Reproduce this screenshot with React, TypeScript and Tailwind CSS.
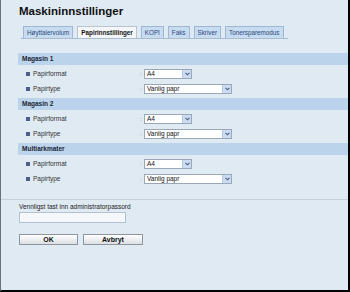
import React from 'react';

const tabs = ['Høyttalervolum', 'Papirinnstillinger', 'KOPI', 'Faks', 'Skriver', 'Tonersparemodus'];

const sections = ['Magasin 1', 'Magasin 2', 'Multiarkmater'];

const Select = ({ value, width }: { value: string; width: string }) => (
  <div className={`flex h-[10px] items-stretch border border-[#9aa7b8] bg-white ${width}`}>
    <span className="flex-1 pl-[2px] text-[6.5px] leading-[8px] text-[#111]">{value}</span>
    <span className="flex w-[9px] items-center justify-center border-l border-[#b7c7dc] bg-[#cbdcf2]">
      <svg width="5" height="4" viewBox="0 0 5 4">
        <path d="M0.5 0.8 L2.5 2.8 L4.5 0.8" stroke="#4a5a78" strokeWidth="1.1" fill="none" />
      </svg>
    </span>
  </div>
);

const Row = ({ label, children }: { label: string; children: React.ReactNode }) => (
  <div className="flex h-[15px] items-center">
    <span className="ml-[8px] h-[4px] w-[4px] bg-[#4b5f8c]" />
    <span className="ml-[3px] w-[107px] text-[6.5px] text-[#333]">{label}</span>
    <span className="w-[4px] text-[6px] leading-none text-[#666]">:</span>
    {children}
  </div>
);

export default function App() {
  return (
    <div className="box-border flex h-[292px] w-[350px] flex-col border-b-2 border-l border-r-2 border-b-black border-l-[#6b7178] border-r-black bg-[#e0eaf3] font-['Liberation_Sans',Arial,sans-serif]">
      <h1 className="ml-[18px] mt-[4px] text-[11.5px] font-bold leading-[14px] text-[#111]">Maskininnstillinger</h1>

      {/* tab strip */}
      <div className="ml-[20px] mt-[8px] flex w-[267px] gap-[4px] border-b border-[#a9bcd2] pl-[2px]">
        {tabs.map((t) => {
          const active = t === 'Papirinnstillinger';
          return (
            <div
              key={t}
              className={`flex h-[12px] items-center border border-b-0 px-[3px] text-[6.3px] ${
                active
                  ? 'border-[#b7c4d2] bg-[#f4f6f9] font-bold text-[#111]'
                  : 'border-[#9fb7d2] bg-[#c7dbf1] text-[#2a4a7c]'
              }`}
            >
              {t}
            </div>
          );
        })}
      </div>

      <div className="ml-[17px] mt-[14px] flex flex-col">
        {sections.map((s) => (
          <div key={s} className="flex h-[45px] flex-col">
            <div className="flex h-[12px] items-center bg-[#bcd4eb] pl-[4px] text-[6.5px] font-bold text-[#1b2535]">
              {s}
            </div>
            <div className="pt-[1px]">
              <Row label="Papirformat">
                <Select value="A4" width="w-[48px]" />
              </Row>
              <Row label="Papirtype">
                <Select value="Vanlig papr" width="w-[88px]" />
              </Row>
            </div>
          </div>
        ))}
      </div>

      <div className="mt-[11px] h-px w-full bg-[#c4d1de]" />

      <div className="ml-[18px] mt-[3px] flex flex-col">
        <span className="text-[6.5px] leading-[8px] text-[#222]">Vennligst tast inn administratorpassord</span>
        <div className="mt-[1px] h-[11px] w-[107px] border border-[#b3c1d1] bg-[#f5f8fb]" />
        <div className="mt-[11px] flex gap-[5px]">
          <button className="h-[11px] w-[59px] border border-[#8f959c] bg-gradient-to-b from-white to-[#dcdfe3] text-[7px] font-bold leading-none text-[#111]">
            OK
          </button>
          <button className="h-[11px] w-[60px] border border-[#8f959c] bg-gradient-to-b from-white to-[#dcdfe3] text-[7px] font-bold leading-none text-[#111]">
            Avbryt
          </button>
        </div>
      </div>
    </div>
  );
}
